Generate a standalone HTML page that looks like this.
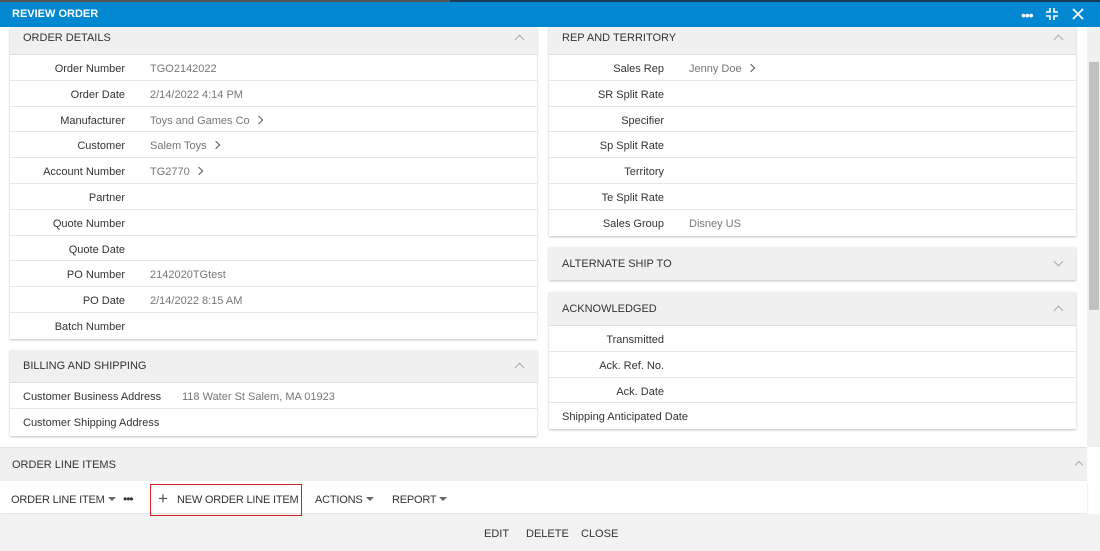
<!DOCTYPE html>
<html><head><style>
*{margin:0;padding:0;box-sizing:border-box}
body{width:1100px;height:551px;overflow:hidden;background:#fff;font-family:"Liberation Sans",sans-serif;font-size:11px;color:#333;position:relative}
.a{position:absolute}
.top{left:0;top:0;width:1100px;height:27px;background:#0288d1;border-top:2px solid #1d3b55}
.title{left:12px;top:8px;color:#fff;font-weight:bold;font-size:11px}
.panel{position:absolute;background:#fff;box-shadow:0 1px 2px rgba(0,0,0,.25)}
.hd{height:28px;background:#f0f0f0;border-bottom:1px solid #ddd;position:relative;padding-left:13px;line-height:23px;font-size:11px;color:#333}
.hd .chev{position:absolute;right:14px;top:9px;width:7px;height:7px;border-left:1px solid #aaa;border-top:1px solid #aaa;transform:rotate(45deg)}
.hd .chev.dn{transform:rotate(225deg);top:7px}
.row{height:25.8px;border-bottom:1px solid #e6e6e6;position:relative;line-height:29px}
.row:last-child{border-bottom:none}
.lb{position:absolute;right:412px;text-align:right;white-space:nowrap}
.v{position:absolute;left:140px;color:#777;white-space:nowrap}
.l2{position:absolute;left:13px;white-space:nowrap}
.gt{display:inline-block;width:6px;height:6px;border-right:1.3px solid #555;border-top:1.3px solid #555;transform:rotate(45deg);margin-left:6px;position:relative;top:-1px}
.tb{font-size:11px;color:#333;top:494px;white-space:nowrap;letter-spacing:-0.2px}
.tri{display:inline-block;border-left:4px solid transparent;border-right:4px solid transparent;border-top:4px solid #666;margin-left:3px;position:relative;top:-2px}
</style></head><body>
<div class="a top"></div>
<div class="a" style="left:0;top:0;width:450px;height:2px;background:#555"></div>
<div class="a title">REVIEW ORDER</div>
<div class="a" style="left:1021px;top:13px;color:#fff;font-size:14px;letter-spacing:-1px;line-height:4px">•••</div>
<svg class="a" style="left:1046px;top:8px" width="12" height="12" viewBox="0 0 12 12" stroke="#fff" stroke-width="1.6" fill="none"><path d="M4 0v4H0M8 0v4h4M4 12V8H0M8 12V8h4"/></svg>
<svg class="a" style="left:1072px;top:8px" width="12" height="12" viewBox="0 0 12 12" stroke="#fff" stroke-width="1.7"><path d="M1 1L11 11M11 1L1 11"/></svg>
<div class="a" style="left:1087px;top:27px;width:13px;height:420px;background:#f0f0f0"></div>
<div class="a" style="left:1089px;top:62px;width:10px;height:248px;background:#c1c1c1"></div>

<div class="panel" style="left:10px;top:27px;width:527px;height:312px">
<div class="hd">ORDER DETAILS<span class="chev"></span></div>
<div class="row"><span class="lb">Order Number</span><span class="v">TGO2142022</span></div>
<div class="row"><span class="lb">Order Date</span><span class="v">2/14/2022 4:14 PM</span></div>
<div class="row"><span class="lb">Manufacturer</span><span class="v">Toys and Games Co<span class="gt"></span></span></div>
<div class="row"><span class="lb">Customer</span><span class="v">Salem Toys<span class="gt"></span></span></div>
<div class="row"><span class="lb">Account Number</span><span class="v">TG2770<span class="gt"></span></span></div>
<div class="row"><span class="lb">Partner</span></div>
<div class="row"><span class="lb">Quote Number</span></div>
<div class="row"><span class="lb">Quote Date</span></div>
<div class="row"><span class="lb">PO Number</span><span class="v">2142020TGtest</span></div>
<div class="row"><span class="lb">PO Date</span><span class="v">2/14/2022 8:15 AM</span></div>
<div class="row"><span class="lb">Batch Number</span></div>
</div>

<div class="panel" style="left:10px;top:350px;width:527px;height:86px">
<div class="hd" style="height:33px;line-height:33px">BILLING AND SHIPPING<span class="chev" style="top:14px"></span></div>
<div class="row"><span class="l2">Customer Business Address</span><span class="v" style="left:172px">118 Water St Salem, MA 01923</span></div>
<div class="row"><span class="l2">Customer Shipping Address</span></div>
</div>

<div class="panel" style="left:549px;top:27px;width:527px;height:209px">
<div class="hd">REP AND TERRITORY<span class="chev"></span></div>
<div class="row"><span class="lb">Sales Rep</span><span class="v">Jenny Doe<span class="gt"></span></span></div>
<div class="row"><span class="lb">SR Split Rate</span></div>
<div class="row"><span class="lb">Specifier</span></div>
<div class="row"><span class="lb">Sp Split Rate</span></div>
<div class="row"><span class="lb">Territory</span></div>
<div class="row"><span class="lb">Te Split Rate</span></div>
<div class="row"><span class="lb">Sales Group</span><span class="v">Disney US</span></div>
</div>

<div class="panel" style="left:549px;top:247px;width:527px;height:33px">
<div class="hd" style="height:33px;line-height:34px;border:none">ALTERNATE SHIP TO<span class="chev dn" style="top:11px"></span></div>
</div>

<div class="panel" style="left:549px;top:292px;width:527px;height:137px">
<div class="hd" style="height:34px;line-height:35px">ACKNOWLEDGED<span class="chev" style="top:15px"></span></div>
<div class="row"><span class="lb">Transmitted</span></div>
<div class="row"><span class="lb">Ack. Ref. No.</span></div>
<div class="row"><span class="lb">Ack. Date</span></div>
<div class="row"><span class="l2">Shipping Anticipated Date</span></div>
</div>

<div class="a" style="left:0;top:447px;width:1087px;height:34px;background:#f0f0f0;border-top:1px solid #e2e2e2"></div>
<div class="a" style="left:12px;top:459px">ORDER LINE ITEMS</div>
<div class="a" style="left:1076px;top:462px;width:6px;height:6px;border-left:1px solid #aaa;border-top:1px solid #aaa;transform:rotate(45deg)"></div>
<div class="a" style="left:0;top:481px;width:1087px;height:32px;background:#fff;box-shadow:0 1px 2px rgba(0,0,0,.15)"></div>
<div class="a" style="left:0;top:514px;width:1100px;height:37px;background:#f2f2f2"></div>
<div class="a tb" style="left:11px">ORDER LINE ITEM<span class="tri"></span></div>
<div class="a tb" style="left:123px;font-size:12px;letter-spacing:-1px;top:492px">•••</div>
<div class="a" style="left:150px;top:484px;width:152px;height:32px;border:1.5px solid #d0202a;z-index:2"></div>
<div class="a tb" style="left:158px;top:489px;font-size:17px;color:#555">+</div>
<div class="a tb" style="left:177px">NEW ORDER LINE ITEM</div>
<div class="a tb" style="left:315px">ACTIONS<span class="tri"></span></div>
<div class="a tb" style="left:392px">REPORT<span class="tri"></span></div>
<div class="a" style="left:484px;top:528px">EDIT</div>
<div class="a" style="left:526px;top:528px">DELETE</div>
<div class="a" style="left:581px;top:528px">CLOSE</div>
</body></html>
